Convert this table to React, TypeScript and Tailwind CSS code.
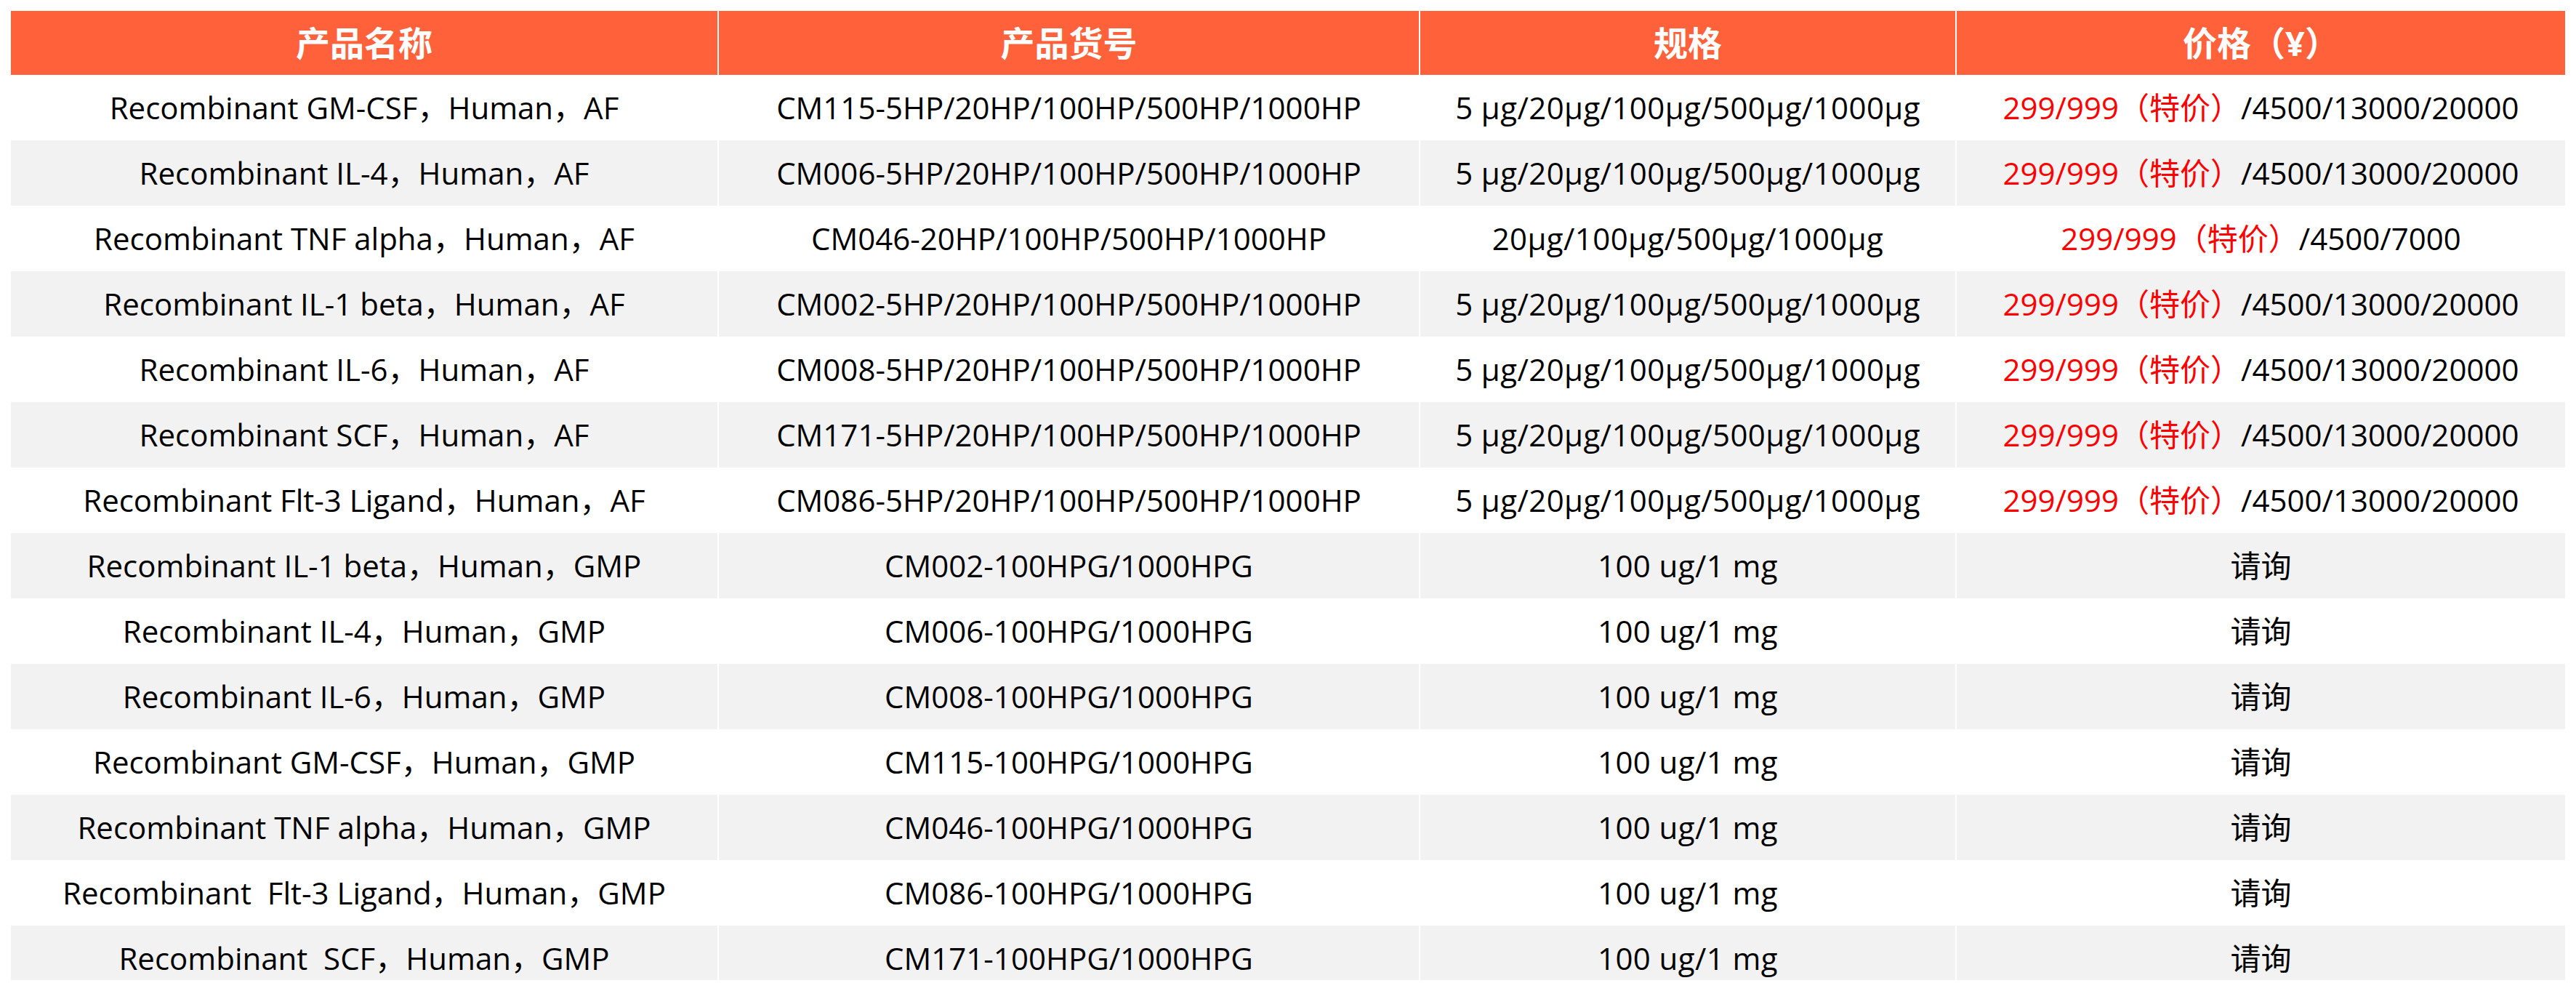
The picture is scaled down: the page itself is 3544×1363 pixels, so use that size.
import React from "react";

type Row = { name: string; code: string; spec: string; price: "special" | "special2" | "ask" };

const rows: Row[] = [
  { name: "Recombinant GM-CSF，Human，AF", code: "CM115-5HP/20HP/100HP/500HP/1000HP", spec: "5 μg/20μg/100μg/500μg/1000μg", price: "special" },
  { name: "Recombinant IL-4，Human，AF", code: "CM006-5HP/20HP/100HP/500HP/1000HP", spec: "5 μg/20μg/100μg/500μg/1000μg", price: "special" },
  { name: "Recombinant TNF alpha，Human，AF", code: "CM046-20HP/100HP/500HP/1000HP", spec: "20μg/100μg/500μg/1000μg", price: "special2" },
  { name: "Recombinant IL-1 beta，Human，AF", code: "CM002-5HP/20HP/100HP/500HP/1000HP", spec: "5 μg/20μg/100μg/500μg/1000μg", price: "special" },
  { name: "Recombinant IL-6，Human，AF", code: "CM008-5HP/20HP/100HP/500HP/1000HP", spec: "5 μg/20μg/100μg/500μg/1000μg", price: "special" },
  { name: "Recombinant SCF，Human，AF", code: "CM171-5HP/20HP/100HP/500HP/1000HP", spec: "5 μg/20μg/100μg/500μg/1000μg", price: "special" },
  { name: "Recombinant Flt-3 Ligand，Human，AF", code: "CM086-5HP/20HP/100HP/500HP/1000HP", spec: "5 μg/20μg/100μg/500μg/1000μg", price: "special" },
  { name: "Recombinant IL-1 beta，Human，GMP", code: "CM002-100HPG/1000HPG", spec: "100 ug/1 mg", price: "ask" },
  { name: "Recombinant IL-4，Human，GMP", code: "CM006-100HPG/1000HPG", spec: "100 ug/1 mg", price: "ask" },
  { name: "Recombinant IL-6，Human，GMP", code: "CM008-100HPG/1000HPG", spec: "100 ug/1 mg", price: "ask" },
  { name: "Recombinant GM-CSF，Human，GMP", code: "CM115-100HPG/1000HPG", spec: "100 ug/1 mg", price: "ask" },
  { name: "Recombinant TNF alpha，Human，GMP", code: "CM046-100HPG/1000HPG", spec: "100 ug/1 mg", price: "ask" },
  { name: "Recombinant  Flt-3 Ligand，Human，GMP", code: "CM086-100HPG/1000HPG", spec: "100 ug/1 mg", price: "ask" },
  { name: "Recombinant  SCF，Human，GMP", code: "CM171-100HPG/1000HPG", spec: "100 ug/1 mg", price: "ask" },
];

const font = { fontFamily: '"Open Sans", "Noto Sans CJK SC", sans-serif' };

function Price({ kind }: { kind: Row["price"] }) {
  if (kind === "ask") return <span>请询</span>;
  return (
    <span>
      <span className="text-[#ff0000]">299/999（特价）</span>
      {kind === "special" ? "/4500/13000/20000" : "/4500/7000"}
    </span>
  );
}

export default function App() {
  return (
    <div className="bg-white w-[3544px] h-[1363px] p-[15px] overflow-hidden" style={font}>
      <div className="h-[1333px] overflow-hidden">
        <div className="grid grid-cols-[972px_963px_736px_837px] gap-x-[2px] h-[88px] text-white font-bold text-[47px]">
          {["产品名称", "产品货号", "规格", "价格（¥）"].map((h) => (
            <div key={h} className="bg-[#ff623b] flex items-center justify-center leading-none">
              {h}
            </div>
          ))}
        </div>
        {rows.map((r, i) => {
          const bg = i % 2 === 1 ? "bg-[#f2f2f2]" : "bg-white";
          const cell = `${bg} flex items-center justify-center whitespace-pre leading-none`;
          return (
            <div key={i} className="grid grid-cols-[972px_963px_736px_837px] gap-x-[2px] h-[90px] text-black text-[42px]">
              <div className={cell}>{r.name}</div>
              <div className={cell}>{r.code}</div>
              <div className={cell}>
                <span className="tracking-[0.4px]">{r.spec}</span>
              </div>
              <div className={cell}>
                <Price kind={r.price} />
              </div>
            </div>
          );
        })}
      </div>
    </div>
  );
}
